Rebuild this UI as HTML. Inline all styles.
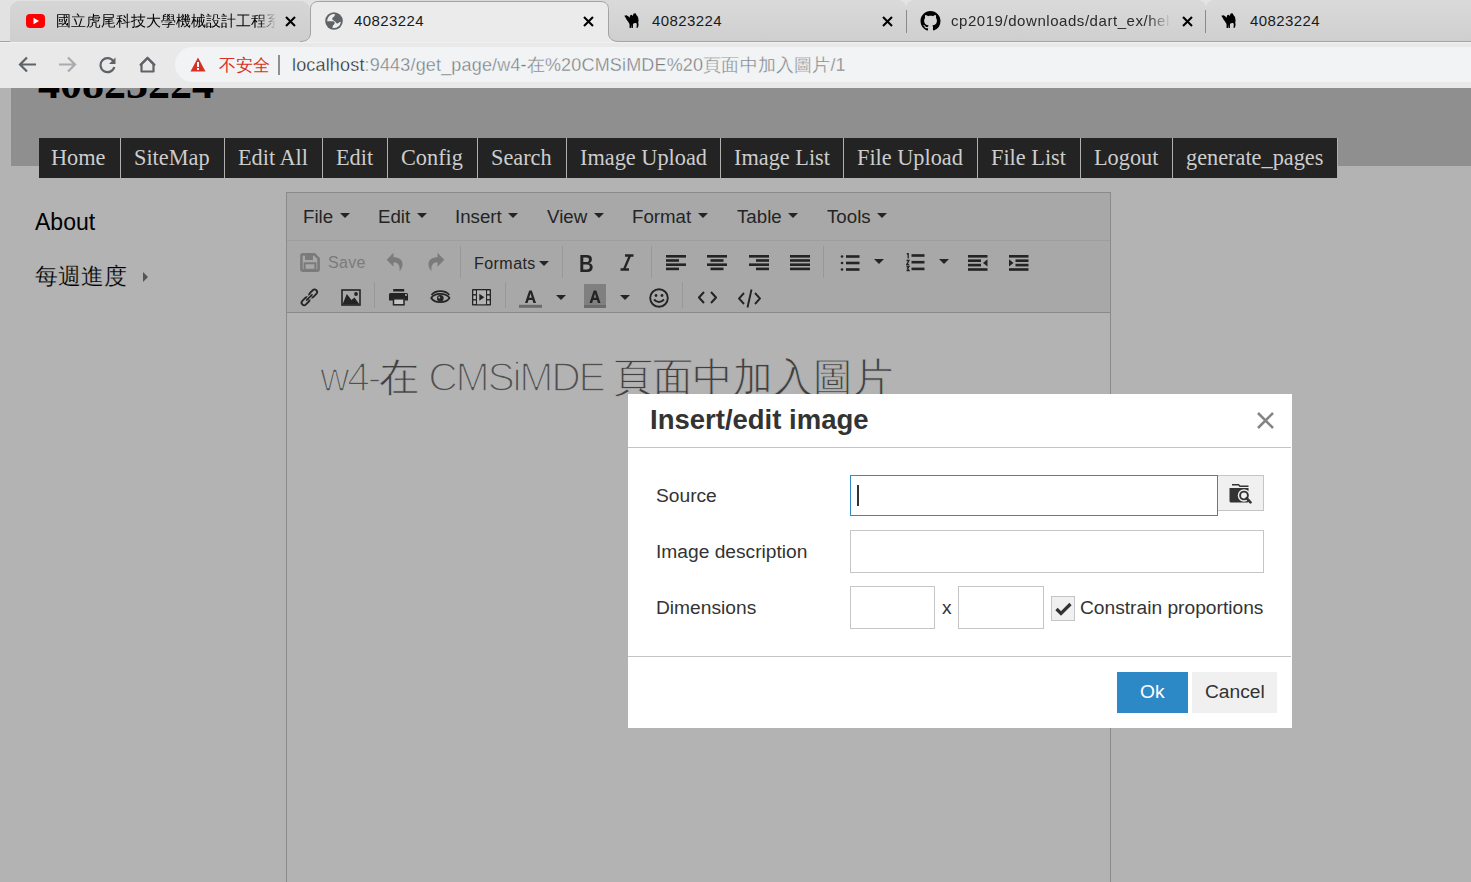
<!DOCTYPE html>
<html><head><meta charset="utf-8">
<style>
*{box-sizing:border-box;margin:0;padding:0}
html,body{width:1471px;height:882px;overflow:hidden;background:#b3b3b3;font-family:"Liberation Sans",sans-serif}
.a{position:absolute}
/* chrome */
#strip{left:0;top:0;width:1471px;height:42px;background:linear-gradient(#dadada,#cfcfcf);border-bottom:1px solid #a3a3a3}
.tab{top:1px;height:41px;border-radius:9px 9px 0 0}
.ttl{font-size:15px;color:#2a2a2a;top:12px;white-space:nowrap}
.tx{font-size:17px;color:#000;top:9px;font-weight:bold}
.sep{width:1px;height:23px;top:10px;background:#8a8a8a}
#toolbar{left:0;top:42px;width:1471px;height:46px;background:#e9e9ea;border-top:1px solid #f1f1f1}
#omni{left:175px;top:47px;width:1320px;height:35px;border-radius:18px;background:#f1f3f4}
/* page */
#hdr{left:11px;top:88px;width:1460px;height:78px;background:#8f8f8f}
#nav{left:39px;top:138px;height:40px;background:#232323;display:flex}
#nav div{height:40px;font-family:"Liberation Serif",serif;font-size:22.3px;color:#cdcdcd;line-height:40px;padding:0 0 0 13px;border-right:1px solid #b0b0b0;white-space:nowrap}
.side{font-size:23px;color:#000}
#ed{left:286px;top:192px;width:825px;height:700px;border:1px solid #8a8a8a;background:#b3b3b3}
#menubar{left:0;top:0;width:823px;height:48px;background:#a8a8a8;border-bottom:1px solid #9e9e9e}
.mi{font-size:18.7px;color:#242424;top:14px;white-space:nowrap}
.tri{width:0;height:0;border-left:5px solid transparent;border-right:5px solid transparent;border-top:5px solid #242424}
#tb{left:0;top:48px;width:823px;height:72px;background:#a8a8a8;border-bottom:1px solid #8a8a8a}
.vs{width:1px;background:#989898}
/* dialog */
#dlg{left:628px;top:394px;width:664px;height:334px;background:#fff}
.lbl{font-size:19.2px;color:#333;white-space:nowrap}
.inp{border:1px solid #c5c5c5;background:#fff}
</style></head><body>
<div id="strip" class="a"></div>
<div class="a" style="left:0;top:0;width:10px;height:41px;background:#e2e2e2"></div>
<div class="a" style="left:0;top:0;width:320px;height:12px;background:#e2e2e2"></div>
<!-- tab1 -->
<div class="a tab" style="left:10px;width:300px;background:linear-gradient(#d6d6d6,#cecece)"></div>
<svg class="a" style="left:26px;top:14px" width="19" height="14" viewBox="0 0 19 14"><rect x="0" y="0" width="19" height="14" rx="4" fill="#f00"/><path d="M7.5 3.8 L13 7 L7.5 10.2Z" fill="#fff"/></svg>
<div class="a ttl" style="left:56px;width:220px;overflow:hidden;-webkit-mask-image:linear-gradient(90deg,#000 204px,transparent 220px);color:#000">國立虎尾科技大學機械設計工程系</div>
<svg class="a" style="left:285px;top:16px" width="11" height="11" viewBox="0 0 11 11"><path d="M1 1L10 10M10 1L1 10" stroke="#000" stroke-width="2.1"/></svg>
<!-- tab2 active -->
<svg class="a" style="left:300px;top:0" width="319" height="44" viewBox="0 0 319 44"><path d="M0 41.5C6 41.5 10.5 39 10.5 33V9.5C10.5 4 13.5 1.5 19 1.5H300C305.5 1.5 308.5 4 308.5 9.5V33C308.5 39 313 41.5 319 41.5V44H0Z" fill="#ebebeb"/><path d="M0 41.5C6 41.5 10.5 39 10.5 33V9.5C10.5 4 13.5 1.5 19 1.5H300C305.5 1.5 308.5 4 308.5 9.5V33C308.5 39 313 41.5 319 41.5" fill="none" stroke="#a3a3a3" stroke-width="1"/></svg>
<svg class="a" style="left:325px;top:12px" width="18" height="18" viewBox="0 0 18 18"><circle cx="9" cy="9" r="8.8" fill="#5f6368"/><path d="M9.8 2.05A6.95 6.95 0 0 0 2.05 9.3L8.2 9.3C9.2 9.3 9.8 10.2 9.7 11.2C9.6 12.5 8.2 13 7.8 14L7.4 15.8A6.95 6.95 0 0 0 15.95 9.8C14.5 9.6 13.5 11.8 12 11.5C10.8 11.2 10.8 9.8 9.5 9C8.2 8.2 6.8 7.8 7.3 6.3C7.7 5 9.3 4.8 9.8 3.5Z" fill="#ececec"/></svg>
<div class="a ttl" style="left:354px;letter-spacing:0.4px;color:#1a1a1a">40823224</div>
<svg class="a" style="left:583px;top:16px" width="11" height="11" viewBox="0 0 11 11"><path d="M1 1L10 10M10 1L1 10" stroke="#000" stroke-width="2.1"/></svg>
<!-- tab3 -->

<svg class="a camel" style="left:624px;top:13px" width="16" height="16" viewBox="0 0 16 16"><path d="M0.3 2.8L2.5 2.2L4.2 3.2L5.5 4.8L6.2 2.2L7.8 1.8L8.8 3.0L9.6 0.4L11.5 0.3L12.8 2.5L14 4L14.6 7.5L14.2 9.5L14.6 11.5L14 14.5L12.5 15L12.8 11.5L12.3 10L11 10L9 10.8L8.9 15L7.5 15L7.2 11.5L6.9 15L5.6 15L5.5 11L4 8.5L2.5 6.5L1.5 4.5Z" fill="#000"/></svg>
<div class="a ttl" style="left:652px;letter-spacing:0.4px;color:#1a1a1a">40823224</div>
<svg class="a" style="left:882px;top:16px" width="11" height="11" viewBox="0 0 11 11"><path d="M1 1L10 10M10 1L1 10" stroke="#000" stroke-width="2.1"/></svg>
<!-- tab4 -->
<svg class="a" style="left:897px;top:0" width="18" height="8" viewBox="0 0 18 8"><path d="M0 0H18C13 0 10 2 9 7C8 2 5 0 0 0Z" fill="#e4e4e4"/></svg>
<svg class="a" style="left:1197px;top:0" width="18" height="8" viewBox="0 0 18 8"><path d="M0 0H18C13 0 10 2 9 7C8 2 5 0 0 0Z" fill="#e4e4e4"/></svg>

<div class="a sep" style="left:906px"></div>
<svg class="a" style="left:920px;top:11px" width="21" height="20" viewBox="0 0 16 16"><path fill="#000" d="M8 0C3.58 0 0 3.58 0 8c0 3.54 2.29 6.53 5.47 7.59.4.07.55-.17.55-.38 0-.19-.01-.82-.01-1.49-2.01.37-2.53-.49-2.69-.94-.09-.23-.48-.94-.82-1.13-.28-.15-.68-.52-.01-.53.63-.01 1.08.58 1.23.82.72 1.21 1.87.87 2.33.66.07-.52.28-.87.51-1.07-1.78-.2-3.640-.89-3.64-3.95 0-.87.31-1.59.82-2.15-.08-.2-.36-1.02.08-2.12 0 0 .67-.21 2.2.82.64-.18 1.32-.27 2-.27.68 0 1.36.09 2 .27 1.53-1.04 2.2-.82 2.2-.82.44 1.1.16 1.92.08 2.12.51.56.82 1.27.82 2.15 0 3.07-1.87 3.750-3.65 3.95.29.25.54.73.54 1.48 0 1.07-.01 1.93-.01 2.2 0 .21.15.46.55.38A8.013 8.013 0 0016 8c0-4.42-3.58-8-8-8z"/></svg>
<div class="a ttl" style="left:951px;width:220px;letter-spacing:0.55px;overflow:hidden;-webkit-mask-image:linear-gradient(90deg,#000 196px,transparent 220px)">cp2019/downloads/dart_ex/hel</div>
<svg class="a" style="left:1182px;top:16px" width="11" height="11" viewBox="0 0 11 11"><path d="M1 1L10 10M10 1L1 10" stroke="#000" stroke-width="2.1"/></svg>
<div class="a sep" style="left:1205px"></div>
<!-- tab5 -->
<svg class="a" style="left:1221px;top:13px" width="16" height="16" viewBox="0 0 16 16"><path d="M0.3 2.8L2.5 2.2L4.2 3.2L5.5 4.8L6.2 2.2L7.8 1.8L8.8 3.0L9.6 0.4L11.5 0.3L12.8 2.5L14 4L14.6 7.5L14.2 9.5L14.6 11.5L14 14.5L12.5 15L12.8 11.5L12.3 10L11 10L9 10.8L8.9 15L7.5 15L7.2 11.5L6.9 15L5.6 15L5.5 11L4 8.5L2.5 6.5L1.5 4.5Z" fill="#000"/></svg>
<div class="a ttl" style="left:1250px;letter-spacing:0.4px;color:#1a1a1a">40823224</div>

<div id="toolbar" class="a"></div>
<svg class="a" style="left:18px;top:56px" width="19" height="17" viewBox="0 0 19 17"><path d="M18 8.5H3M9 1.5L2 8.5L9 15.5" fill="none" stroke="#5f6368" stroke-width="2.2"/></svg>
<svg class="a" style="left:58px;top:56px" width="19" height="17" viewBox="0 0 19 17"><path d="M1 8.5H16M10 1.5L17 8.5L10 15.5" fill="none" stroke="#a9abae" stroke-width="2.2"/></svg>
<svg class="a" style="left:98px;top:56px" width="19" height="18" viewBox="0 0 19 18"><path d="M15.5 5.5A7 7 0 1 0 16.3 11" fill="none" stroke="#5f6368" stroke-width="2.2"/><path d="M17.5 1.5V8H11Z" fill="#5f6368"/></svg>
<svg class="a" style="left:139px;top:56px" width="17" height="17" viewBox="0 0 17 17"><path d="M2.5 15.5V8L8.5 2L14.5 8V15.5Z" fill="none" stroke="#5f6368" stroke-width="2.2" stroke-linejoin="round"/><path d="M1 9.5L8.5 2L16 9.5" fill="none" stroke="#5f6368" stroke-width="2.2"/></svg>
<div id="omni" class="a"></div>
<svg class="a" style="left:190px;top:57px" width="16" height="15" viewBox="0 0 16 15"><path d="M8 0.5L15.5 14.5H0.5Z" fill="#d93025"/><rect x="7" y="5" width="2" height="5" fill="#fff"/><rect x="7" y="11" width="2" height="2" fill="#fff"/></svg>
<div class="a" style="left:219px;top:53px;font-size:17.3px;color:#d93025;white-space:nowrap">不安全</div>
<div class="a" style="left:278px;top:55px;width:2px;height:20px;background:#8d8f92"></div>
<div class="a" id="url" style="left:292px;top:53px;font-size:18px;letter-spacing:0.17px;color:#202124;-webkit-text-stroke:0.35px #f1f3f4;white-space:nowrap">localhost<span style="color:#777c81">:9443/get_page/w4-在%20CMSiMDE%20頁面中加入圖片/1</span></div>

<div id="hdr" class="a"></div>
<div class="a" style="left:38px;top:54px;height:60px;width:300px;overflow:hidden;clip-path:inset(34px 0 0 0)"><div style="font-family:'Liberation Serif',serif;font-weight:bold;font-size:44px;line-height:60px;color:#000">40823224</div></div>
<div id="nav" class="a">
<div style="width:82px;padding-left:12px">Home</div><div style="width:104px">SiteMap</div><div style="width:98px">Edit All</div><div style="width:65px">Edit</div><div style="width:90px">Config</div><div style="width:89px">Search</div><div style="width:154px">Image Upload</div><div style="width:123px">Image List</div><div style="width:134px">File Upload</div><div style="width:103px">File List</div><div style="width:92px">Logout</div><div style="width:165px">generate_pages</div>
</div>

<div class="a side" style="left:35px;top:209px">About</div>
<div class="a side" style="left:35px;top:261px;-webkit-text-stroke:0.25px #b3b3b3">每週進度</div>
<div class="a" style="left:143px;top:272px;width:0;height:0;border-top:5.5px solid transparent;border-bottom:5.5px solid transparent;border-left:5px solid #555"></div>

<div id="ed" class="a">
 <div id="menubar" class="a"></div>
 <div id="tb" class="a"></div>
</div>
<div class="a mi" style="left:303px;top:206px">File</div>
<div class="a" style="left:340px;top:213px;width:0;height:0;border-left:5.0px solid transparent;border-right:5.0px solid transparent;border-top:5px solid #242424"></div>
<div class="a mi" style="left:378px;top:206px">Edit</div>
<div class="a" style="left:417px;top:213px;width:0;height:0;border-left:5.0px solid transparent;border-right:5.0px solid transparent;border-top:5px solid #242424"></div>
<div class="a mi" style="left:455px;top:206px">Insert</div>
<div class="a" style="left:508px;top:213px;width:0;height:0;border-left:5.0px solid transparent;border-right:5.0px solid transparent;border-top:5px solid #242424"></div>
<div class="a mi" style="left:547px;top:206px">View</div>
<div class="a" style="left:594px;top:213px;width:0;height:0;border-left:5.0px solid transparent;border-right:5.0px solid transparent;border-top:5px solid #242424"></div>
<div class="a mi" style="left:632px;top:206px">Format</div>
<div class="a" style="left:698px;top:213px;width:0;height:0;border-left:5.0px solid transparent;border-right:5.0px solid transparent;border-top:5px solid #242424"></div>
<div class="a mi" style="left:737px;top:206px">Table</div>
<div class="a" style="left:788px;top:213px;width:0;height:0;border-left:5.0px solid transparent;border-right:5.0px solid transparent;border-top:5px solid #242424"></div>
<div class="a mi" style="left:827px;top:206px">Tools</div>
<div class="a" style="left:877px;top:213px;width:0;height:0;border-left:5.0px solid transparent;border-right:5.0px solid transparent;border-top:5px solid #242424"></div>
<svg class="a" style="left:300px;top:253px" width="20" height="19" viewBox="0 0 20 19"><path d="M1.4 2.5A1.1 1.1 0 0 1 2.5 1.4H14.5L18.6 5.5V16.5A1.1 1.1 0 0 1 17.5 17.6H2.5A1.1 1.1 0 0 1 1.4 16.5Z" fill="none" stroke="#7b7b7b" stroke-width="2.6"/><rect x="5" y="1.5" width="8" height="5.5" fill="#7b7b7b"/><rect x="4.6" y="10.3" width="10.8" height="6.5" fill="none" stroke="#7b7b7b" stroke-width="2"/></svg>
<div class="a" style="left:328px;top:254px;font-size:16px;letter-spacing:0.3px;color:#7b7b7b">Save</div>
<svg class="a" style="left:386px;top:252px" width="18" height="20" viewBox="0 0 18 20"><path d="M0.7 7.8L7.5 0.8V5.3C13 5.3 17 8 16.5 13C16.2 16 14.5 18 13.5 19.2C14.2 14 12.5 10.2 7.5 10.2V14.8Z" fill="#7b7b7b"/></svg>
<svg class="a" style="left:427px;top:252px" width="18" height="20" viewBox="0 0 18 20"><path d="M17.3 7.8L10.5 0.8V5.3C5 5.3 1 8 1.5 13C1.8 16 3.5 18 4.5 19.2C3.8 14 5.5 10.2 10.5 10.2V14.8Z" fill="#7b7b7b"/></svg>
<div class="a vs" style="left:460px;top:246px;height:32px"></div>
<div class="a" style="left:474px;top:255px;font-size:16px;letter-spacing:0.45px;color:#242424">Formats</div>
<div class="a" style="left:539px;top:261px;width:0;height:0;border-left:5.0px solid transparent;border-right:5.0px solid transparent;border-top:5px solid #242424"></div>
<div class="a vs" style="left:562px;top:246px;height:32px"></div>
<div class="a" style="left:579px;top:251px;font-size:23.5px;line-height:27px;font-weight:bold;color:#242424;transform:scaleX(0.86);transform-origin:0 0">B</div>
<svg class="a" style="left:618px;top:254px" width="18" height="17" viewBox="0 0 18 17"><path d="M7 1.5H15.5M2.5 15.5H11M12 1.5L6 15.5" fill="none" stroke="#242424" stroke-width="2.3"/></svg>
<div class="a vs" style="left:651px;top:246px;height:32px"></div>
<svg class="a" style="left:666px;top:255px" width="20" height="16" viewBox="0 0 20 16"><rect x="0" y="0.0" width="20" height="2.6" fill="#242424"/><rect x="0" y="4.2" width="13" height="2.6" fill="#242424"/><rect x="0" y="8.4" width="20" height="2.6" fill="#242424"/><rect x="0" y="12.6" width="13" height="2.6" fill="#242424"/></svg>
<svg class="a" style="left:707px;top:255px" width="20" height="16" viewBox="0 0 20 16"><rect x="0" y="0.0" width="20" height="2.6" fill="#242424"/><rect x="3.5" y="4.2" width="13.0" height="2.6" fill="#242424"/><rect x="0" y="8.4" width="20" height="2.6" fill="#242424"/><rect x="3.5" y="12.6" width="13.0" height="2.6" fill="#242424"/></svg>
<svg class="a" style="left:749px;top:255px" width="20" height="16" viewBox="0 0 20 16"><rect x="0" y="0.0" width="20" height="2.6" fill="#242424"/><rect x="7" y="4.2" width="13" height="2.6" fill="#242424"/><rect x="0" y="8.4" width="20" height="2.6" fill="#242424"/><rect x="7" y="12.6" width="13" height="2.6" fill="#242424"/></svg>
<svg class="a" style="left:790px;top:255px" width="20" height="16" viewBox="0 0 20 16"><rect x="0" y="0.0" width="20" height="2.6" fill="#242424"/><rect x="0" y="4.2" width="20" height="2.6" fill="#242424"/><rect x="0" y="8.4" width="20" height="2.6" fill="#242424"/><rect x="0" y="12.6" width="20" height="2.6" fill="#242424"/></svg>
<div class="a vs" style="left:823px;top:246px;height:32px"></div>
<svg class="a" style="left:840px;top:254px" width="20" height="18" viewBox="0 0 20 18"><circle cx="2" cy="2.5" r="1.3" fill="#242424"/><circle cx="2" cy="9" r="1.3" fill="#242424"/><circle cx="2" cy="15.5" r="1.3" fill="#242424"/><rect x="6" y="1.2" width="13.5" height="2.6" fill="#242424"/><rect x="6" y="7.7" width="13.5" height="2.6" fill="#242424"/><rect x="6" y="14.2" width="13.5" height="2.6" fill="#242424"/></svg>
<div class="a" style="left:874px;top:259px;width:0;height:0;border-left:5.5px solid transparent;border-right:5.5px solid transparent;border-top:5px solid #242424"></div>
<svg class="a" style="left:906px;top:253px" width="19" height="19" viewBox="0 0 19 19"><path d="M0.8 1.2L2.2 0.5V5.5" fill="none" stroke="#242424" stroke-width="1.3"/><path d="M0.5 7.5H3L0.8 11.5H3.2" fill="none" stroke="#242424" stroke-width="1.3"/><path d="M0.5 13.5H3L1.5 15.5L3 17.5H0.5" fill="none" stroke="#242424" stroke-width="1.3"/><rect x="5.5" y="1.2" width="13" height="2.6" fill="#242424"/><rect x="5.5" y="7.9" width="13" height="2.6" fill="#242424"/><rect x="5.5" y="14.6" width="13" height="2.6" fill="#242424"/></svg>
<div class="a" style="left:939px;top:259px;width:0;height:0;border-left:5.5px solid transparent;border-right:5.5px solid transparent;border-top:5px solid #242424"></div>
<svg class="a" style="left:968px;top:255px" width="20" height="16" viewBox="0 0 20 16"><rect x="0" y="0" width="19.5" height="2.6" fill="#242424"/><rect x="0" y="4.4" width="13" height="2.6" fill="#242424"/><rect x="0" y="8.8" width="13" height="2.6" fill="#242424"/><rect x="0" y="13.2" width="19.5" height="2.6" fill="#242424"/><path d="M19.5 4.2V11.6L15 7.9Z" fill="#242424"/></svg>
<svg class="a" style="left:1009px;top:255px" width="20" height="16" viewBox="0 0 20 16"><rect x="0" y="0" width="19.5" height="2.6" fill="#242424"/><rect x="6.5" y="4.4" width="13" height="2.6" fill="#242424"/><rect x="6.5" y="8.8" width="13" height="2.6" fill="#242424"/><rect x="0" y="13.2" width="19.5" height="2.6" fill="#242424"/><path d="M0 4.2V11.6L4.5 7.9Z" fill="#242424"/></svg>
<svg class="a" style="left:299px;top:287px" width="21" height="21" viewBox="0 0 21 21"><g fill="none" stroke="#242424" stroke-width="1.8"><path d="M-1.9 -2.55H1.9A2.55 2.55 0 0 1 1.9 2.55H-1.9A2.55 2.55 0 0 1 -1.9 -2.55Z" transform="translate(14.2 6.4) rotate(-45)"/><path d="M-1.9 -2.55H1.9A2.55 2.55 0 0 1 1.9 2.55H-1.9A2.55 2.55 0 0 1 -1.9 -2.55Z" transform="translate(6.5 14.3) rotate(-45)"/></g><path d="M9 11.7L11.7 9" stroke="#a8a8a8" stroke-width="3.6"/><path d="M7.2 13.6L13.5 7.3" stroke="#242424" stroke-width="1.6"/></svg>
<svg class="a" style="left:341px;top:289px" width="20" height="17" viewBox="0 0 20 17"><rect x="1" y="1" width="18" height="15" fill="none" stroke="#242424" stroke-width="1.6"/><path d="M1.5 15.5L5.8 5L10.5 11L13.5 8.5L18.5 15.5Z" fill="#242424"/><circle cx="15" cy="5" r="1.9" fill="#242424"/></svg>
<div class="a vs" style="left:374px;top:282px;height:26px"></div>
<svg class="a" style="left:389px;top:289px" width="20" height="17" viewBox="0 0 20 17"><rect x="4.2" y="0" width="11" height="2.5" fill="#242424"/><path d="M1.5 4H17.5A1.5 1.5 0 0 1 19 5.5V11.5H15.5V9H4V11.5H0V5.5A1.5 1.5 0 0 1 1.5 4Z" fill="#242424"/><rect x="4.5" y="9.8" width="10.5" height="6" fill="#c4c4c4" stroke="#242424" stroke-width="1.5"/><circle cx="17" cy="6" r="0.9" fill="#c4c4c4"/></svg>
<svg class="a" style="left:430px;top:289px" width="21" height="16" viewBox="0 0 21 16"><path d="M1.2 9C4.5 3.5 16 3.5 19.5 9C16 14.5 4.5 14.5 1.2 9Z" fill="none" stroke="#242424" stroke-width="1.7"/><path d="M1.5 6C5 0.8 15.8 0.8 19.3 6" fill="none" stroke="#242424" stroke-width="1.6"/><circle cx="10.3" cy="9.2" r="3.3" fill="#242424"/><circle cx="9.2" cy="8.4" r="1" fill="#a8a8a8"/></svg>
<svg class="a" style="left:472px;top:289px" width="20" height="17" viewBox="0 0 20 17"><rect x="0" y="0" width="19" height="16.5" rx="0.8" fill="#242424"/><rect x="1.3" y="1.5" width="2.6" height="3.6" fill="#b8b8b8"/><rect x="1.3" y="6.5" width="2.6" height="3.6" fill="#b8b8b8"/><rect x="1.3" y="11.5" width="2.6" height="3.6" fill="#b8b8b8"/><rect x="15.1" y="1.5" width="2.6" height="3.6" fill="#b8b8b8"/><rect x="15.1" y="6.5" width="2.6" height="3.6" fill="#b8b8b8"/><rect x="15.1" y="11.5" width="2.6" height="3.6" fill="#b8b8b8"/><rect x="5" y="1.3" width="9" height="14" fill="#b3b3b3"/><path d="M7.3 4.8L12.3 8.3L7.3 11.8Z" fill="#242424"/></svg>
<div class="a vs" style="left:505px;top:282px;height:26px"></div>
<svg class="a" style="left:519px;top:289px" width="23" height="19" viewBox="0 0 23 19"><path d="M6 14L10.2 1.5H12.8L17 14H14.4L13.5 11H9.5L8.6 14ZM10.2 8.8H12.8L11.5 4.6Z" fill="#242424" fill-rule="evenodd"/><rect x="0" y="15.8" width="23" height="3" fill="#6b6b6b"/></svg>
<div class="a" style="left:556px;top:295px;width:0;height:0;border-left:5.5px solid transparent;border-right:5.5px solid transparent;border-top:5px solid #242424"></div>
<svg class="a" style="left:584px;top:284px" width="22" height="24" viewBox="0 0 22 24"><rect x="0" y="0" width="22" height="21" fill="#808080"/><path d="M6 14L10.2 1.5H12.8L17 14H14.4L13.5 11H9.5L8.6 14ZM10.2 8.8H12.8L11.5 4.6Z" transform="translate(-0.5 5)" fill="#242424" fill-rule="evenodd"/><rect x="0" y="21" width="22" height="3" fill="#6b6b6b"/></svg>
<div class="a" style="left:620px;top:295px;width:0;height:0;border-left:5.5px solid transparent;border-right:5.5px solid transparent;border-top:5px solid #242424"></div>
<svg class="a" style="left:649px;top:288px" width="20" height="20" viewBox="0 0 20 20"><circle cx="10" cy="10" r="8.8" fill="none" stroke="#242424" stroke-width="1.9"/><circle cx="7" cy="7.5" r="1.4" fill="#242424"/><circle cx="13" cy="7.5" r="1.4" fill="#242424"/><path d="M5 11.5Q10 16.5 15 11.5" fill="none" stroke="#242424" stroke-width="1.9"/></svg>
<div class="a vs" style="left:682px;top:282px;height:26px"></div>
<svg class="a" style="left:698px;top:291px" width="19" height="13" viewBox="0 0 19 13"><path d="M6 1L1 6.5L6 12M13 1L18 6.5L13 12" fill="none" stroke="#242424" stroke-width="2"/></svg>
<svg class="a" style="left:738px;top:289px" width="23" height="19" viewBox="0 0 23 19"><path d="M6 4L1 9.5L6 15M17 4L22 9.5L17 15M13.5 0.5L9.5 18.5" fill="none" stroke="#242424" stroke-width="1.9"/></svg>
<div class="a" style="left:320px;top:352px;font-size:41px;line-height:50px;letter-spacing:-2.3px;color:#505050;-webkit-text-stroke:1.7px #b3b3b3;white-space:nowrap">w4-<span style="font-size:40px;letter-spacing:0;-webkit-text-stroke:0.8px #b3b3b3;color:#404040">在</span> CMSiMDE <span style="font-size:40px;letter-spacing:0;-webkit-text-stroke:0.8px #b3b3b3;color:#404040">頁面中加入圖片</span></div>
<div id="dlg" class="a"></div>
<div class="a" style="left:650px;top:404px;font-size:27.5px;font-weight:bold;color:#333;white-space:nowrap">Insert/edit image</div>
<svg class="a" style="left:1257px;top:412px" width="17" height="17" viewBox="0 0 17 17"><path d="M1 1L16 16M16 1L1 16" stroke="#858585" stroke-width="2.6"/></svg>
<div class="a" style="left:628px;top:447px;width:663px;height:1px;background:#c5c5c5"></div>
<div class="a lbl" style="left:656px;top:485px">Source</div>
<div class="a lbl" style="left:656px;top:541px">Image description</div>
<div class="a lbl" style="left:656px;top:597px">Dimensions</div>
<div class="a inp" style="left:850px;top:475px;width:368px;height:41px;border-color:#2d8ac7"></div>
<div class="a" style="left:857px;top:485px;width:1.5px;height:21px;background:#333"></div>
<div class="a" style="left:1218px;top:475px;width:46px;height:36px;background:#f0f0f0;border:1px solid #c5c5c5;border-left:none"></div>
<svg class="a" style="left:1229px;top:484px" width="23" height="21" viewBox="0 0 23 21"><path d="M3 0.8H9.5L11 2.2H19.5" fill="none" stroke="#333" stroke-width="1.5"/><path d="M0.5 4H19.5V17A1.5 1.5 0 0 1 18 18.5H2A1.5 1.5 0 0 1 0.5 17Z" fill="#333"/><circle cx="15" cy="11.5" r="6.2" fill="#f0f0f0"/><circle cx="15" cy="11.5" r="3.9" fill="none" stroke="#333" stroke-width="1.9"/><path d="M17.6 14.2L21.5 18.3" stroke="#333" stroke-width="2.6" stroke-linecap="round"/></svg>
<div class="a inp" style="left:850px;top:530px;width:414px;height:43px"></div>
<div class="a inp" style="left:850px;top:586px;width:85px;height:43px"></div>
<div class="a lbl" style="left:942px;top:597px">x</div>
<div class="a inp" style="left:958px;top:586px;width:86px;height:43px"></div>
<div class="a" style="left:1051px;top:596px;width:24px;height:25px;background:#f0f0f0;border:1px solid #c5c5c5"></div>
<svg class="a" style="left:1055px;top:602px" width="17" height="14" viewBox="0 0 17 14"><path d="M1.5 7L6 11.5L15.5 2" fill="none" stroke="#333" stroke-width="3.2"/></svg>
<div class="a lbl" style="left:1080px;top:597px">Constrain proportions</div>
<div class="a" style="left:628px;top:656px;width:663px;height:1px;background:#c5c5c5"></div>
<div class="a" style="left:1117px;top:672px;width:71px;height:41px;background:#2d88c6"></div>
<div class="a lbl" style="left:1140px;top:681px;color:#fff">Ok</div>
<div class="a" style="left:1192px;top:672px;width:85px;height:41px;background:#f0f0f0"></div>
<div class="a lbl" style="left:1205px;top:681px">Cancel</div>
</body></html>
